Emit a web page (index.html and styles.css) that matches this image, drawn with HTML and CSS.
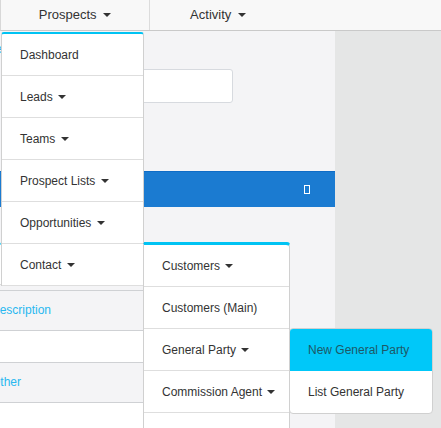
FILE: index.html
```html
<!DOCTYPE html>
<html>
<head>
<meta charset="utf-8">
<link rel="stylesheet" href="styles.css">
</head>
<body>
<nav class="topnav">
  <div class="nav-item nav-prospects">Prospects <span class="caret"></span>
    <ul class="menu menu-main">
      <li class="menu-item">Dashboard</li>
      <li class="menu-item">Leads <span class="caret"></span></li>
      <li class="menu-item">Teams <span class="caret"></span></li>
      <li class="menu-item">Prospect Lists <span class="caret"></span></li>
      <li class="menu-item">Opportunities <span class="caret"></span></li>
      <li class="menu-item has-sub">Contact <span class="caret"></span>
        <ul class="menu menu-sub">
          <li class="menu-item">Customers <span class="caret"></span></li>
          <li class="menu-item">Customers (Main)</li>
          <li class="menu-item has-sub">General Party <span class="caret"></span>
            <ul class="menu menu-sub2">
              <li class="menu-item active">New General Party</li>
              <li class="menu-item">List General Party</li>
            </ul>
          </li>
          <li class="menu-item">Commission Agent <span class="caret"></span></li>
          <li class="menu-item">&nbsp;</li>
        </ul>
      </li>
    </ul>
  </div>
  <div class="nav-item nav-activity">Activity <span class="caret"></span></div>
</nav>
<main class="page">
  <section class="content">
    <div class="tabline"><span class="tab-label">Home</span></div>
    <div class="search-row"><div class="search-box"></div></div>
    <div class="blue-bar"><span class="tofu"></span></div>
    <div class="lower">
      <div class="panel"></div>
      <div class="row row-head first"><span class="row-label">Description</span></div>
      <div class="row row-blank"></div>
      <div class="row row-head"><span class="row-label">Other</span></div>
      <div class="row row-blank last"></div>
    </div>
  </section>
  <aside class="side"></aside>
</main>
</body>
</html>
```

FILE: styles.css
```css
* { box-sizing: border-box; }
html, body { margin: 0; padding: 0; overflow: hidden; }
body {
  font-family: "Liberation Sans", Arial, sans-serif;
  color: #333;
  width: 441px;
  height: 428px;
  background: #f4f4f6;
}
.topnav {
  display: flex;
  height: 31px;
  background: #f8f8f8;
  border-bottom: 1px solid #c9c9c9;
  border-left: 1px solid #d8d8d8;
  position: relative;
  z-index: 5;
}
.nav-item {
  font-size: 13px;
  line-height: 29px;
  text-align: center;
  color: #333;
}
.nav-prospects {
  width: 149px;
  border-right: 1px solid #dcdcdc;
  position: relative;
}
.nav-activity { width: 136px; }
.caret {
  display: inline-block;
  width: 0;
  height: 0;
  border-top: 4px solid #333;
  border-left: 4px solid transparent;
  border-right: 4px solid transparent;
  vertical-align: middle;
  margin-left: 3px;
  margin-top: -1px;
}
.menu {
  list-style: none;
  margin: 0;
  padding: 0;
  position: absolute;
  background: #fff;
  text-align: left;
  font-size: 12px;
  line-height: 42px;
}
.menu-item {
  height: 42px;
  padding-left: 18px;
  border-bottom: 1px solid #dedede;
  white-space: nowrap;
  position: relative;
  color: #333;
}
.menu-item .caret { margin-left: 2px; }
.menu-main {
  top: 32px;
  left: 0;
  width: 143px;
  border-top: 2px solid #00c3f3;
  border-left: 1px solid #d0d0d0;
  border-right: 1px solid #d0d0d0;
  border-radius: 3px 3px 0 0;
}
.menu-sub {
  top: -1px;
  left: 100%;
  width: 147px;
  border-top: 2px solid #00c3f3;
  border-left: 1px solid #d0d0d0;
  border-right: 1px solid #d0d0d0;
  border-radius: 0 4px 0 0;
}
.menu-sub2 {
  top: -1px;
  left: 100%;
  width: 144px;
  border: 1px solid #d0d0d0;
  border-radius: 4px;
  overflow: hidden;
}
.menu-sub2 .menu-item:last-child { border-bottom: 0; }
.menu-item.active {
  background: #00c8f9;
  color: #1e5867;
  border-bottom-color: #00c8f9;
}
.page {
  display: flex;
  height: 397px;
}
.content {
  width: 335px;
  background: #f4f4f6;
  display: flex;
  flex-direction: column;
}
.side {
  flex: 1;
  background: #e5e6e6;
}
.tabline {
  height: 38px;
  font-size: 12px;
  line-height: 36px;
  overflow: hidden;
}
.tab-label {
  color: #29b8f0;
  margin-left: -30px;
}
.search-row {
  height: 102px;
  padding-left: 20px;
}
.search-box {
  width: 213px;
  height: 34px;
  background: #fff;
  border: 1px solid #d7dadf;
  border-radius: 3px;
}
.blue-bar {
  height: 36px;
  background: #1b7bd1;
  border-top: 1px solid #0f6cc6;
  display: flex;
  justify-content: flex-end;
  align-items: center;
  padding-right: 25px;
}
.tofu {
  width: 6px;
  height: 9px;
  border: 1px solid #fff;
}
.lower {
  width: 290px;
  flex: 1;
  display: flex;
  flex-direction: column;
}
.panel {
  margin-top: 35px;
  height: 43px;
  background: #fff;
  border-top: 2px solid #00c3f3;
  border-bottom: 1px solid #dcdcdc;
  border-radius: 3px 3px 0 0;
}
.row { font-size: 12px; }
.row-head {
  height: 41px;
  background: #f4f4f6;
  border-top: 1px solid #cfd1d4;
  border-bottom: 1px solid #cfd1d4;
  line-height: 39px;
}
.row-head.first { margin-top: 5px; }
.row-blank { height: 31px; background: #fff; }
.row-blank.last { flex: 1; }
.row-label {
  color: #29b8f0;
  display: inline-block;
  margin-left: -9px;
}
```
